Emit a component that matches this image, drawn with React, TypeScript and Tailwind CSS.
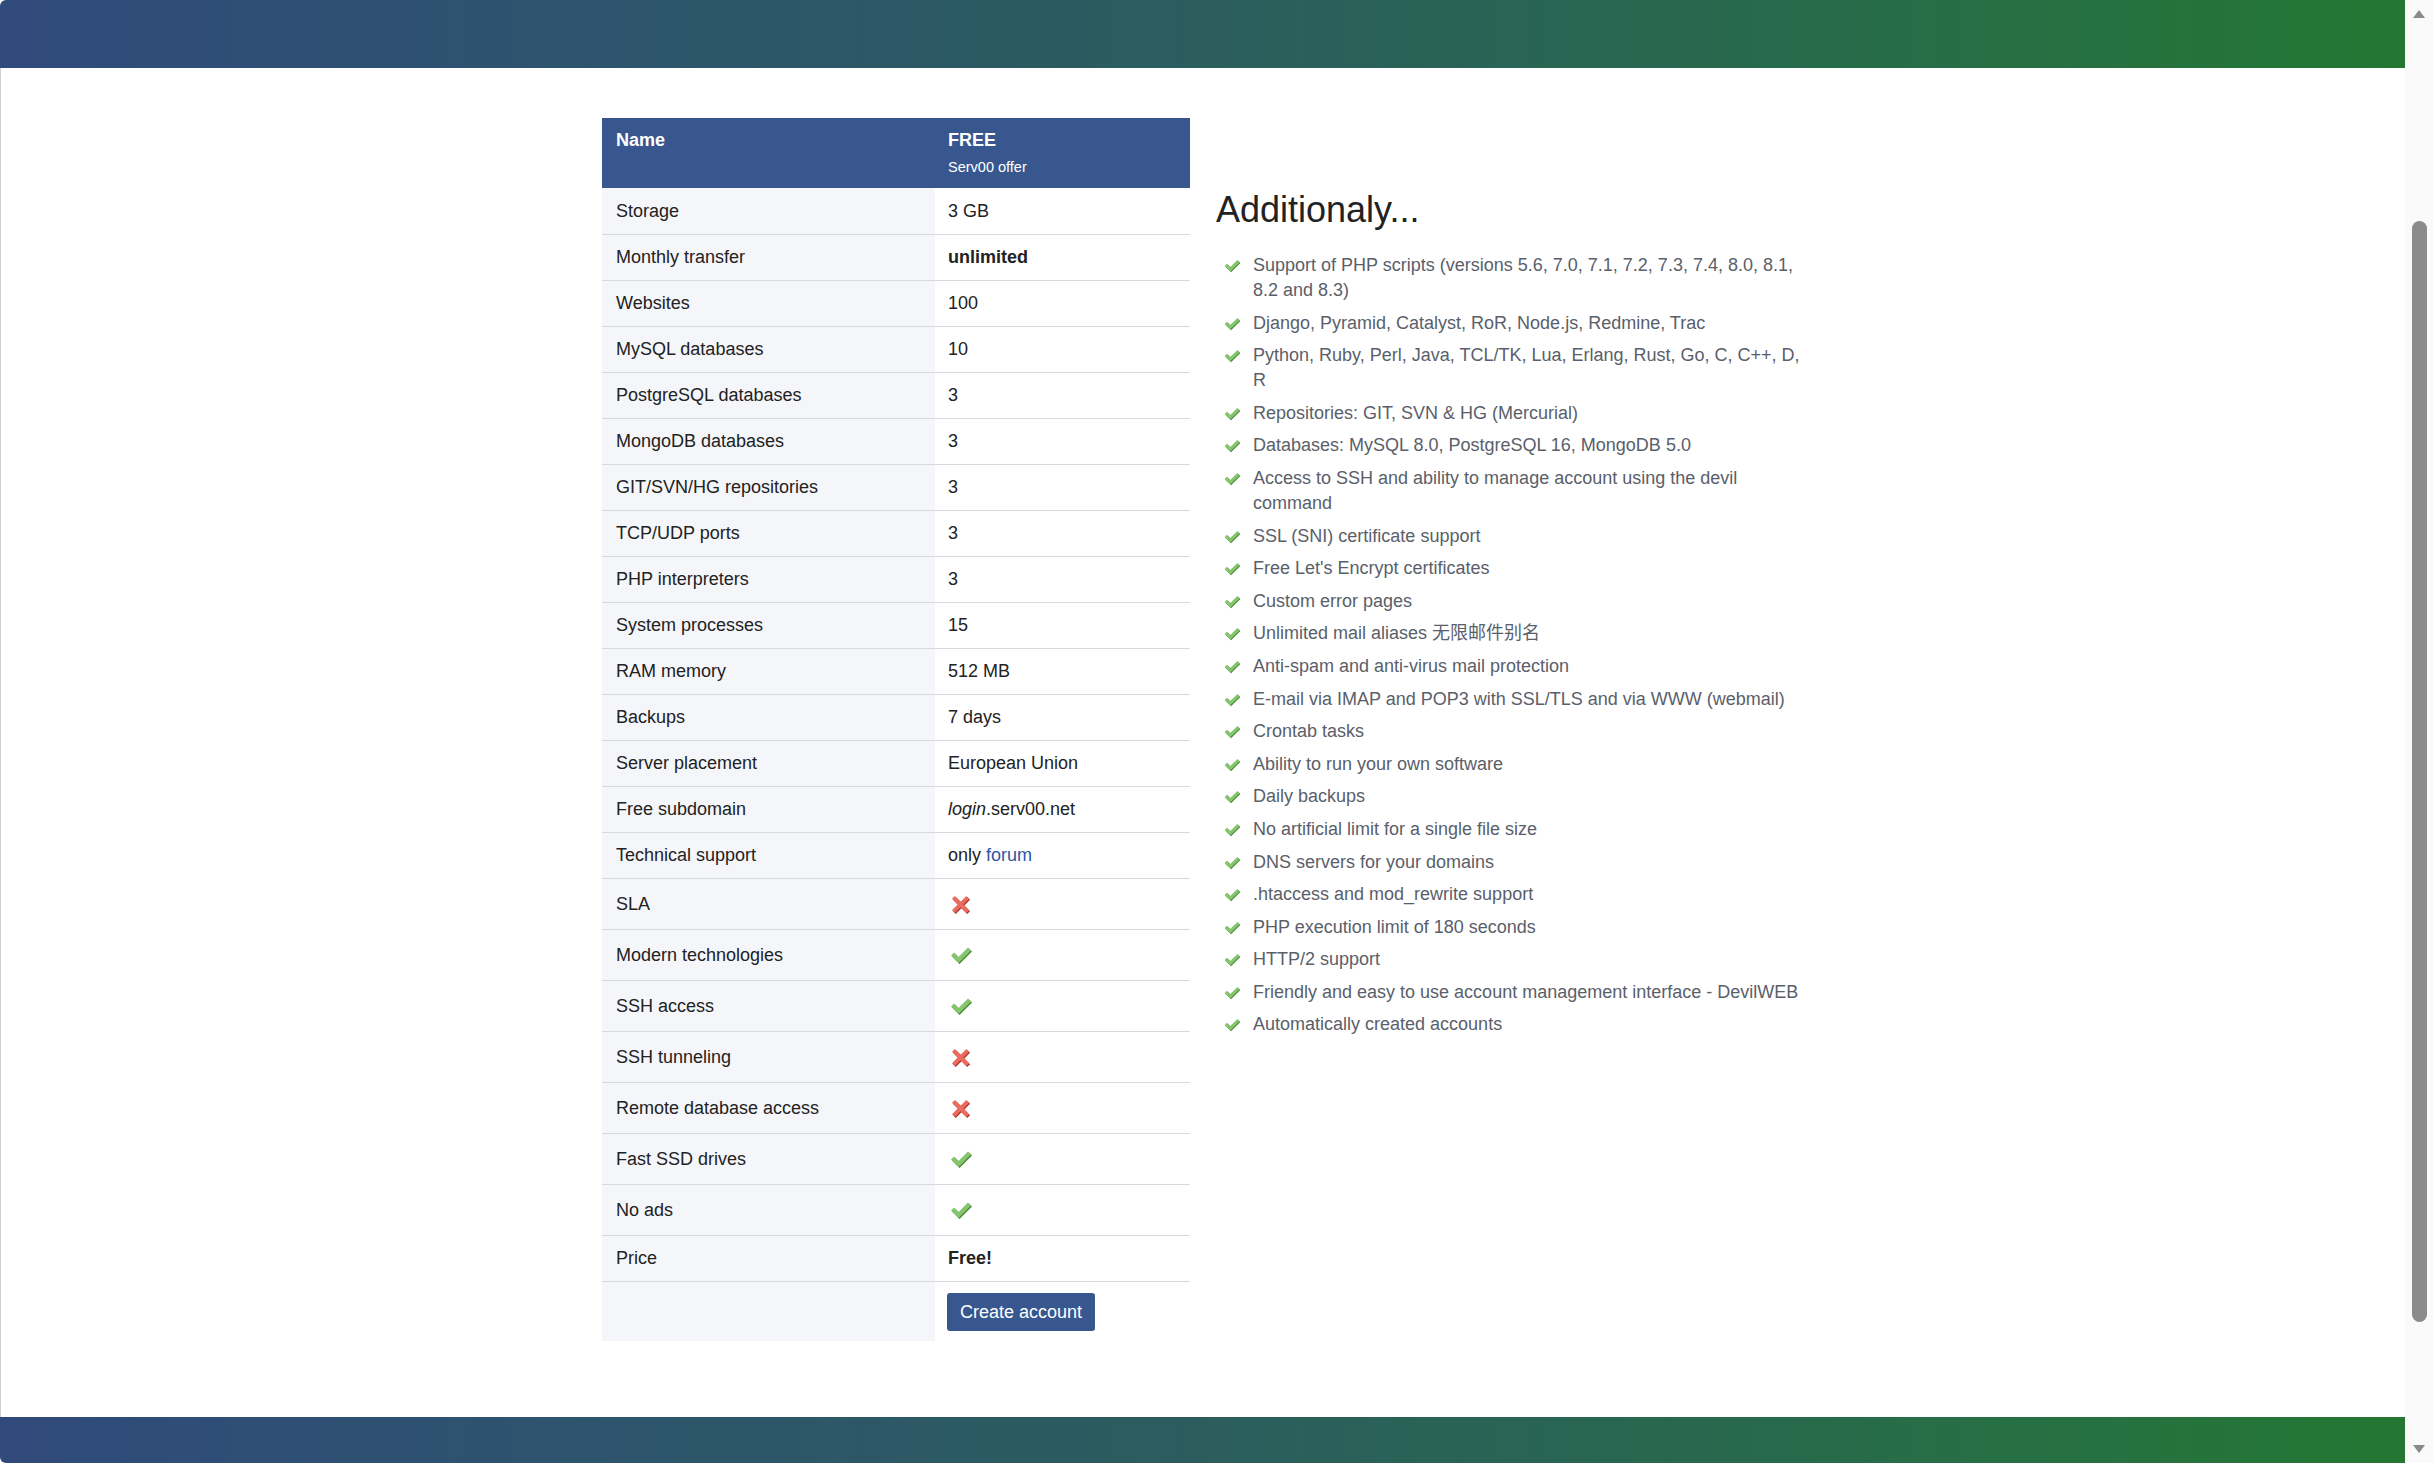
import React from 'react';

type Row = { label: string; value: React.ReactNode; icon?: boolean };

const CheckIcon: React.FC<{ className?: string }> = ({ className }) => (
  <svg viewBox="0 0 22 20" className={className}>
    <polygon points="1.5,11.5 4.5,8.5 9,13 18.5,3.5 21.5,6.5 9,19" fill="#4b8a37" />
    <polygon points="0.5,10.5 3.5,7.5 8,12 17.5,2.5 20.5,5.5 8,18" fill="#84c56d" />
  </svg>
);

const CrossIcon: React.FC<{ className?: string }> = ({ className }) => (
  <svg viewBox="0 0 20 20" className={className}>
    <polygon points="4,2 10,8 16,2 19,5 13,11 19,17 16,20 10,14 4,20 1,17 7,11 1,5" fill="#a8392f" />
    <polygon points="3,1 9,7 15,1 18,4 12,10 18,16 15,19 9,13 3,19 0,16 6,10 0,4" fill="#ea6b60" />
  </svg>
);

const check = <CheckIcon className="h-[20px] w-[23px]" />;
const cross = <CrossIcon className="ml-[2px] h-[19px] w-[19px]" />;

const rows: Row[] = [
  { label: 'Storage', value: '3 GB' },
  { label: 'Monthly transfer', value: <b>unlimited</b> },
  { label: 'Websites', value: '100' },
  { label: 'MySQL databases', value: '10' },
  { label: 'PostgreSQL databases', value: '3' },
  { label: 'MongoDB databases', value: '3' },
  { label: 'GIT/SVN/HG repositories', value: '3' },
  { label: 'TCP/UDP ports', value: '3' },
  { label: 'PHP interpreters', value: '3' },
  { label: 'System processes', value: '15' },
  { label: 'RAM memory', value: '512 MB' },
  { label: 'Backups', value: '7 days' },
  { label: 'Server placement', value: 'European Union' },
  { label: 'Free subdomain', value: <span><i>login</i>.serv00.net</span> },
  { label: 'Technical support', value: <span>only <a className="text-[#2d56a3]">forum</a></span> },
  { label: 'SLA', value: cross, icon: true },
  { label: 'Modern technologies', value: check, icon: true },
  { label: 'SSH access', value: check, icon: true },
  { label: 'SSH tunneling', value: cross, icon: true },
  { label: 'Remote database access', value: cross, icon: true },
  { label: 'Fast SSD drives', value: check, icon: true },
  { label: 'No ads', value: check, icon: true },
  { label: 'Price', value: <b>Free!</b> },
];

const features: string[] = [
  'Support of PHP scripts (versions 5.6, 7.0, 7.1, 7.2, 7.3, 7.4, 8.0, 8.1, 8.2 and 8.3)',
  'Django, Pyramid, Catalyst, RoR, Node.js, Redmine, Trac',
  'Python, Ruby, Perl, Java, TCL/TK, Lua, Erlang, Rust, Go, C, C++, D, R',
  'Repositories: GIT, SVN & HG (Mercurial)',
  'Databases: MySQL 8.0, PostgreSQL 16, MongoDB 5.0',
  'Access to SSH and ability to manage account using the devil command',
  'SSL (SNI) certificate support',
  "Free Let's Encrypt certificates",
  'Custom error pages',
  'Unlimited mail aliases 无限邮件别名',
  'Anti-spam and anti-virus mail protection',
  'E-mail via IMAP and POP3 with SSL/TLS and via WWW (webmail)',
  'Crontab tasks',
  'Ability to run your own software',
  'Daily backups',
  'No artificial limit for a single file size',
  'DNS servers for your domains',
  '.htaccess and mod_rewrite support',
  'PHP execution limit of 180 seconds',
  'HTTP/2 support',
  'Friendly and easy to use account management interface - DevilWEB',
  'Automatically created accounts',
];

const OfferTable: React.FC = () => (
  <div className="w-[588px] shrink-0 text-[18px] text-[#222]">
    {/* header */}
    <div className="flex h-[70px] bg-[#38578f] text-white">
      <div className="w-[333px] px-[14px] pt-[9px] font-bold leading-[27px]">Name</div>
      <div className="flex-1 px-[13px] pt-[9px]">
        <div className="font-bold leading-[27px]">FREE</div>
        <div className="mt-[3px] text-[14.5px] font-light leading-[20px]">Serv00 offer</div>
      </div>
    </div>

    {rows.map((row, i) => (
      <div
        key={row.label}
        className={`flex ${row.icon ? 'h-[51px]' : 'h-[46px]'} ${i > 0 ? 'border-t border-[#d8d9de]' : ''}`}
      >
        <div className="flex w-[333px] items-center bg-[#f5f6fa] px-[14px]">{row.label}</div>
        <div className={`flex flex-1 items-center ${row.icon ? 'px-[15px]' : 'px-[13px]'}`}>{row.value}</div>
      </div>
    ))}

    <div className="flex h-[60px] border-t border-[#d8d9de]">
      <div className="w-[333px] bg-[#f5f6fa]" />
      <div className="flex-1 px-[12px] pt-[11px]">
        <button className="h-[38px] rounded-[3px] bg-[#38578f] px-[13px] text-[18px] text-white">
          Create account
        </button>
      </div>
    </div>
  </div>
);

const Additional: React.FC = () => (
  <div className="w-[591px] shrink-0 pt-[72px]">
    <h2 className="text-[36px] leading-[40px] text-[#222]">Additionaly...</h2>
    <ul className="mt-[23px] flex flex-col gap-[7.6px] pl-[8px] text-[18px] leading-[25px] text-[#5a606a]">
      {features.map((f, i) => (
        <li key={i} className="flex">
          <span className="flex h-[25px] w-[29px] shrink-0 items-center">
            <CheckIcon className="h-[15px] w-[17px]" />
          </span>
          <span>{f}</span>
        </li>
      ))}
    </ul>
  </div>
);

const Scrollbar: React.FC = () => (
  <div className="flex h-full w-[28px] shrink-0 flex-col items-center bg-[#fafafa]">
    <div className="flex h-[28px] items-center justify-center">
      <div className="h-0 w-0 border-x-[6px] border-b-[8px] border-x-transparent border-b-[#8a8a8a]" />
    </div>
    <div className="flex-1">
      <div className="mt-[193px] h-[1101px] w-[15px] rounded-full bg-[#8b8b8b]" />
    </div>
    <div className="flex h-[28px] items-center justify-center">
      <div className="h-0 w-0 border-x-[6px] border-t-[8px] border-x-transparent border-t-[#8a8a8a]" />
    </div>
  </div>
);

export default function App() {
  return (
    <div className="flex h-[1463px] w-full overflow-hidden bg-white font-['Liberation_Sans','Noto_Sans_CJK_SC',sans-serif]">
      <div className="flex flex-1 flex-col">
        <header className="h-[68px] rounded-tl-[6px] bg-linear-to-r from-[#304a7b] via-[#2b5d5d] to-[#247732]" />
        <main className="flex-1 border-l border-[#cfcfcf] pl-[3px]">
          <div className="mx-auto flex w-[1205px] gap-[26px] pt-[50px]">
            <OfferTable />
            <Additional />
          </div>
        </main>
        <footer className="h-[46px] rounded-bl-[6px] bg-linear-to-r from-[#304a7b] via-[#2b5d5d] to-[#247732]" />
      </div>
      <Scrollbar />
    </div>
  );
}
